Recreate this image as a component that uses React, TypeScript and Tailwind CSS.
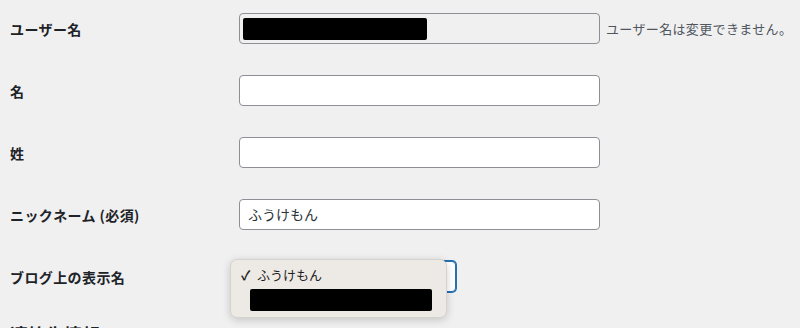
import React from 'react';

const font = { fontFamily: '"Noto Sans CJK JP", "Noto Sans", sans-serif' };

const Label = ({ children }: { children: React.ReactNode }) => (
    <div className="w-[229px] shrink-0 text-[14px] font-semibold text-[#1d2327] leading-[20px] tracking-[0.4px]">{children}</div>
);

const TextField = ({ value = '' }: { value?: string }) => (
    <div className="w-[361px] h-[31px] bg-white border border-[#8c8f94] rounded-[4px] flex items-center px-[8px] text-[14px] text-[#2c3338]">
        {value}
    </div>
);

const App = () => {
    return (
        <div className="min-h-screen h-[328px] overflow-hidden bg-[#f0f0f1]" style={font}>
            <div className="pl-[10px] pt-[13px] flex flex-col gap-[31px]">
                <div className="flex items-center">
                    <Label>ユーザー名</Label>
                    <div className="w-[361px] h-[31px] bg-[#f0f0f1] border border-[#8c8f94] rounded-[4px] flex items-center px-[3px]">
                        <div className="w-[184px] h-[22px] bg-black rounded-[2px]" />
                    </div>
                    <span className="ml-[6px] text-[13px] text-[#50575e] tracking-[0.35px]">ユーザー名は変更できません。</span>
                </div>
                <div className="flex items-center">
                    <Label>名</Label>
                    <TextField />
                </div>
                <div className="flex items-center">
                    <Label>姓</Label>
                    <TextField />
                </div>
                <div className="flex items-center">
                    <Label>ニックネーム (必須)</Label>
                    <TextField value="ふうけもん" />
                </div>
                <div className="flex items-center">
                    <Label>ブログ上の表示名</Label>
                    <div className="relative">
                        <div className="w-[217px] h-[31px] bg-white border border-[#2271b1] rounded-[4px] shadow-[0_0_0_1px_#2271b1]" />
                        <div className="absolute left-[-9px] top-[-2px] w-[217px] h-[59px] bg-[#ede9e5] rounded-[7px] border border-[#d6d2ce] shadow-[0_2px_8px_rgba(0,0,0,0.18)] px-[10px] pt-[6px]">
                            <div className="flex items-center text-[13px] text-[#1d1d1f] leading-[18px]">
                                <span className="w-[16px] text-[13px] font-bold">✓</span>
                                <span>ふうけもん</span>
                            </div>
                            <div className="ml-[9px] mt-[5px] w-[182px] h-[22px] bg-black rounded-[2px]" />
                        </div>
                    </div>
                </div>
            </div>
            <h2 className="pl-[10px] mt-[30px] text-[18px] font-semibold text-[#1d2327] leading-[24px]">連絡先情報</h2>
        </div>
    );
};

export default App;
